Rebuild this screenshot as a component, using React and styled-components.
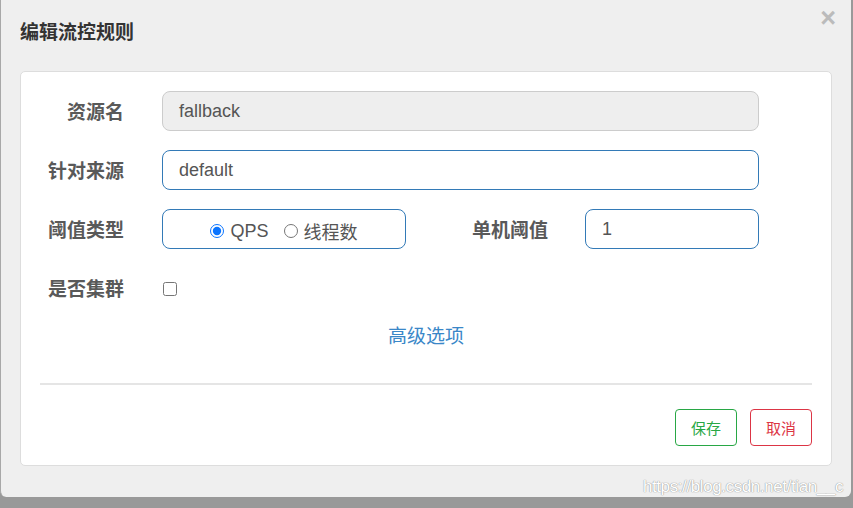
import React from "react"
import styled, { createGlobalStyle } from "styled-components"

const GlobalStyle = createGlobalStyle`
  html, body {
    margin: 0;
    padding: 0;
    background: #999;
    font-family: "Liberation Sans", "Noto Sans CJK SC", sans-serif;
  }
  * { box-sizing: border-box; }
`

const App = () => {
  return (
    <>
      <GlobalStyle />
      <Dialog>
        <Header>
          <Title>编辑流控规则</Title>
          <Close>×</Close>
        </Header>
        <Panel>
          <Row>
            <Label>资源名</Label>
            <Input $width={597} $disabled>fallback</Input>
          </Row>
          <Row>
            <Label>针对来源</Label>
            <Input $width={597}>default</Input>
          </Row>
          <Row>
            <Label>阈值类型</Label>
            <RadioBox>
              <RadioItem>
                <input type='radio' name='grade' defaultChecked />
                QPS
              </RadioItem>
              <RadioItem>
                <input type='radio' name='grade' />
                线程数
              </RadioItem>
            </RadioBox>
            <Label $width={142} $gap={37}>单机阈值</Label>
            <Input $width={174}>1</Input>
          </Row>
          <Row $last>
            <Label>是否集群</Label>
            <Check type='checkbox' />
          </Row>
          <Advanced>高级选项</Advanced>
          <Divider />
          <Footer>
            <Button $color='#28a745'>保存</Button>
            <Button $color='#dc3545'>取消</Button>
          </Footer>
        </Panel>
        <Watermark>https://blog.csdn.net/tian__c</Watermark>
      </Dialog>
    </>
  )
}

export default App

const Dialog = styled.div`
  position: relative;
  width: 851px;
  height: 497px;
  background: #efefef;
  border-left: 1px solid #a8a8a8;
  border-radius: 0 0 6px 6px;
  padding: 0 19px 0 19px;
`

const Header = styled.div`
  display: flex;
  align-items: center;
  justify-content: space-between;
  height: 71px;
  padding-bottom: 6px;
`

const Title = styled.h4`
  margin: 0;
  font-size: 19px;
  line-height: 24px;
  font-weight: bold;
  color: #333;
`

const Close = styled.span`
  position: absolute;
  top: 3px;
  right: 15px;
  font-size: 27px;
  line-height: 30px;
  font-weight: bold;
  color: #bbb;
  font-family: "Liberation Sans", sans-serif;
`

const Panel = styled.div`
  background: #fff;
  border: 1px solid #ddd;
  border-radius: 5px;
  padding: 19px 19px 19px 0;
  height: 395px;
`

const Row = styled.div`
  display: flex;
  align-items: center;
  height: 40px;
  margin-bottom: ${(p) => (p.$last ? 12 : 19)}px;
`

const Label = styled.label`
  width: ${(p) => p.$width || 103}px;
  margin-right: ${(p) => p.$gap || 38}px;
  text-align: right;
  font-size: 19px;
  font-weight: bold;
  color: #595959;
  line-height: 24px;
  padding-top: 4px;
`

const Input = styled.div`
  width: ${(p) => p.$width}px;
  height: 40px;
  display: flex;
  align-items: center;
  padding: 0 16px;
  font-size: 18px;
  color: #555;
  border-radius: 8px;
  background: ${(p) => (p.$disabled ? "#eee" : "#fff")};
  border: 1px solid ${(p) => (p.$disabled ? "#ccc" : "#337ab7")};
`

const RadioBox = styled.div`
  width: 244px;
  height: 40px;
  display: flex;
  align-items: center;
  justify-content: center;
  gap: 15px;
  border: 1px solid #337ab7;
  border-radius: 8px;
`

const RadioItem = styled.label`
  display: flex;
  align-items: center;
  gap: 6px;
  font-size: 18px;
  color: #555;
  padding-top: 4px;

  input {
    margin: 0;
    width: 14px;
    height: 14px;
    accent-color: #0a74ff;
  }
`

const Check = styled.input`
  margin: 0 0 0 1px;
  width: 14px;
  height: 14px;
  position: relative;
  top: 1px;
`

const Advanced = styled.div`
  text-align: center;
  font-size: 19px;
  line-height: 26px;
  color: #3a87c8;
  margin: 0 0 33px 19px;
  padding-top: 4px;
`

const Divider = styled.hr`
  margin: 0 0 24px 19px;
  border: 0;
  height: 2px;
  background: #e5e5e5;
`

const Footer = styled.div`
  display: flex;
  justify-content: flex-end;
  gap: 13px;
`

const Button = styled.button`
  width: 62px;
  height: 37px;
  background: #fff;
  border: 1px solid ${(p) => p.$color};
  color: ${(p) => p.$color};
  border-radius: 4px;
  font-size: 15px;
  font-family: "Liberation Sans", "Noto Sans CJK SC", sans-serif;
  padding: 0;
`

const Watermark = styled.span`
  position: absolute;
  right: 8px;
  bottom: 0;
  font-size: 17px;
  color: #fff;
  text-shadow: 0 0 1px #888, 0 0 1px #aaa;
  letter-spacing: -0.4px;
`
